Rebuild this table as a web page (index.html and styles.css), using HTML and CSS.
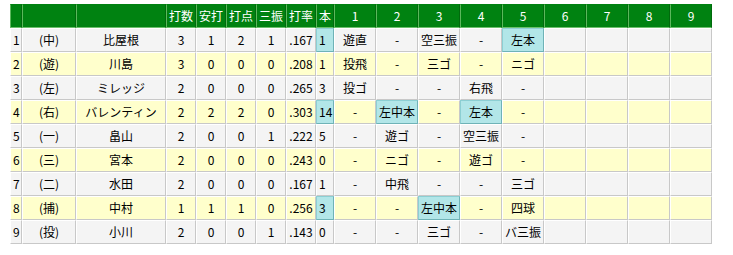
FILE: index.html
```html
<!DOCTYPE html>
<html lang="ja">
<head>
<meta charset="utf-8">
<title>打撃成績</title>
<link rel="stylesheet" href="styles.css">
</head>
<body>
<table class="score">
  <thead>
    <tr>
      <th class="c-no"></th>
      <th class="c-pos"></th>
      <th class="c-name"></th>
      <th class="c-stat">打数</th>
      <th class="c-stat">安打</th>
      <th class="c-stat">打点</th>
      <th class="c-stat">三振</th>
      <th class="c-stat">打率</th>
      <th class="c-hr">本</th>
      <th class="c-inn">1</th>
      <th class="c-inn">2</th>
      <th class="c-inn">3</th>
      <th class="c-inn">4</th>
      <th class="c-inn">5</th>
      <th class="c-inn">6</th>
      <th class="c-inn">7</th>
      <th class="c-inn">8</th>
      <th class="c-inn">9</th>
    </tr>
  </thead>
  <tbody>
    <tr class="odd">
      <td class="no">1</td><td>(中)</td><td>比屋根</td><td>3</td><td>1</td><td>2</td><td>1</td><td>.167</td><td class="hr hit">1</td>
      <td>遊直</td><td>-</td><td>空三振</td><td>-</td><td class="hit">左本</td><td></td><td></td><td></td><td></td>
    </tr>
    <tr class="even">
      <td class="no">2</td><td>(遊)</td><td>川島</td><td>3</td><td>0</td><td>0</td><td>0</td><td>.208</td><td class="hr">1</td>
      <td>投飛</td><td>-</td><td>三ゴ</td><td>-</td><td>ニゴ</td><td></td><td></td><td></td><td></td>
    </tr>
    <tr class="odd">
      <td class="no">3</td><td>(左)</td><td>ミレッジ</td><td>2</td><td>0</td><td>0</td><td>0</td><td>.265</td><td class="hr">3</td>
      <td>投ゴ</td><td>-</td><td>-</td><td>右飛</td><td>-</td><td></td><td></td><td></td><td></td>
    </tr>
    <tr class="even">
      <td class="no">4</td><td>(右)</td><td>バレンティン</td><td>2</td><td>2</td><td>2</td><td>0</td><td>.303</td><td class="hr hit">14</td>
      <td>-</td><td class="hit">左中本</td><td>-</td><td class="hit">左本</td><td>-</td><td></td><td></td><td></td><td></td>
    </tr>
    <tr class="odd">
      <td class="no">5</td><td>(一)</td><td>畠山</td><td>2</td><td>0</td><td>0</td><td>1</td><td>.222</td><td class="hr">5</td>
      <td>-</td><td>遊ゴ</td><td>-</td><td>空三振</td><td>-</td><td></td><td></td><td></td><td></td>
    </tr>
    <tr class="even">
      <td class="no">6</td><td>(三)</td><td>宮本</td><td>2</td><td>0</td><td>0</td><td>0</td><td>.243</td><td class="hr">0</td>
      <td>-</td><td>ニゴ</td><td>-</td><td>遊ゴ</td><td>-</td><td></td><td></td><td></td><td></td>
    </tr>
    <tr class="odd">
      <td class="no">7</td><td>(二)</td><td>水田</td><td>2</td><td>0</td><td>0</td><td>0</td><td>.167</td><td class="hr">1</td>
      <td>-</td><td>中飛</td><td>-</td><td>-</td><td>三ゴ</td><td></td><td></td><td></td><td></td>
    </tr>
    <tr class="even">
      <td class="no">8</td><td>(捕)</td><td>中村</td><td>1</td><td>1</td><td>1</td><td>0</td><td>.256</td><td class="hr hit">3</td>
      <td>-</td><td>-</td><td class="hit">左中本</td><td>-</td><td>四球</td><td></td><td></td><td></td><td></td>
    </tr>
    <tr class="odd">
      <td class="no">9</td><td>(投)</td><td>小川</td><td>2</td><td>0</td><td>0</td><td>1</td><td>.143</td><td class="hr">0</td>
      <td>-</td><td>-</td><td>三ゴ</td><td>-</td><td>バ三振</td><td></td><td></td><td></td><td></td>
    </tr>
  </tbody>
</table>
</body>
</html>
```
FILE: styles.css
```css
html, body {
  margin: 0;
  padding: 0;
  background: #ffffff;
}

body {
  padding: 4px 0 0 10px;
  font-family: "Noto Sans CJK JP", "Liberation Sans", sans-serif;
  font-size: 12px;
  color: #000000;
}

.score {
  border-collapse: separate;
  border-spacing: 0;
  table-layout: fixed;
  width: 702px;
}

.score th,
.score td {
  box-sizing: border-box;
  height: 24px;
  padding: 0;
  line-height: 22px;
  text-align: center;
  white-space: nowrap;
  overflow: hidden;
  font-weight: normal;
}

.score th {
  background: #008211;
  color: #ffffff;
  border-style: solid;
  border-width: 1px;
  border-color: #008211 #006a0c #6cc06c #5cb85c;
}

.c-no { width: 12px; }
.c-pos { width: 54px; }
.c-name { width: 90px; }
.c-stat { width: 30px; }
.c-hr { width: 18px; }
.c-inn { width: 42px; }

.score td {
  border-style: solid;
  border-width: 1px;
  border-color: #ffffff #c8c8c8 #c8c8c8 #ffffff;
}

.odd td { background: #f4f4f4; }
.even td { background: #ffffcc; }

.score td.no,
.score td.hr {
  text-align: left;
  padding-left: 2px;
}

.score td.hit {
  background: #b2e6e8;
  border-color: #8ccfd3 #6fb3b7 #6fb3b7 #8ccfd3;
}
```
